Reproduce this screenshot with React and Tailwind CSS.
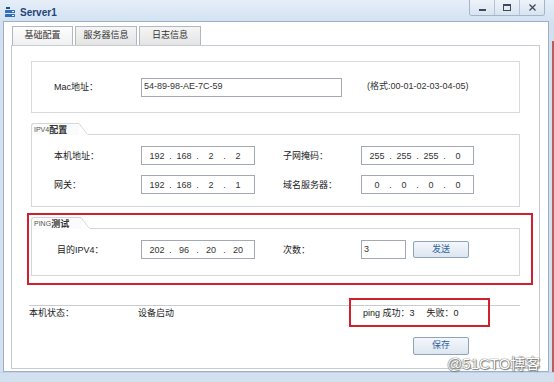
import React from "react";

const FONT = '"Liberation Sans","Noto Sans CJK SC",sans-serif';

function IpField({ parts, wide }) {
  return (
    <div
      className={
        wide
          ? "w-[114px] h-[19px] border border-[#a3a9b2] bg-white flex items-center pl-[4px] text-[9px] leading-[12px] text-[#333]"
          : "w-[113px] h-[19px] border border-[#a3a9b2] bg-white flex items-center pl-[4px] text-[9px] leading-[12px] text-[#333]"
      }
    >
      {parts.map((p, i) => (
        <React.Fragment key={i}>
          {i > 0 && <span className="w-[5px] text-center">.</span>}
          <span className="w-[22px] text-center">{p}</span>
        </React.Fragment>
      ))}
    </div>
  );
}

function Legend({ latin, cjk, w }) {
  return (
    <div className="flex h-[12px] items-stretch">
      <div
        className={
          (w === 50 ? "w-[50px]" : "w-[48px]") +
          " flex items-center border-l border-t border-[#d3d7dc] rounded-tl-[3px] bg-[#fbfbfb] pl-[2px]"
        }
      >
        <span className="text-[7px] leading-[10px] text-[#555]">{latin}</span>
        <span className="text-[9px] leading-[10px] font-bold text-[#333]">{cjk}</span>
      </div>
      <svg width="9" height="12" className="block shrink-0">
        <path d="M0 0.5 L8.5 11.5" stroke="#d3d7dc" strokeWidth="1" fill="none" />
      </svg>
      <div className="flex-1 border-b border-[#d3d7dc]" />
    </div>
  );
}

function Label({ children, w }) {
  return (
    <div
      className={
        (w === 78 ? "w-[78px]" : w === 84 ? "w-[84px]" : "w-[87px]") +
        " text-[9px] leading-[12px] text-[#222] shrink-0"
      }
    >
      {children}
    </div>
  );
}

export default function App() {
  return (
    <div
      className="relative w-[554px] h-[382px] overflow-hidden bg-[#d7e4f2] flex flex-col"
      style={{ fontFamily: FONT }}
    >
      {/* Title bar */}
      <div className="h-[21px] flex items-start bg-linear-to-b from-[#e6eef8] to-[#d3e2f2] shrink-0">
        <svg width="11" height="11" viewBox="0 0 11 11" className="ml-[5px] mt-[7px] shrink-0">
          <rect x="1" y="0" width="4" height="2" fill="#1f4f8f" />
          <rect x="0" y="3" width="10" height="3" rx="0.5" fill="#2f6fc0" />
          <rect x="0" y="7" width="10" height="3" rx="0.5" fill="#2f6fc0" />
          <rect x="7" y="8" width="2" height="1" fill="#ffffff" />
          <rect x="7" y="4" width="2" height="1" fill="#ffffff" />
        </svg>
        <span className="ml-[4px] mt-[6px] text-[10px] leading-[14px] font-bold text-[#1f4478]">
          Server1
        </span>
        <div className="ml-auto mr-[9px] flex h-[16px] border border-t-0 border-[#a3b5cb] rounded-b-[3px] overflow-hidden">
          <div className="w-[25px] flex items-end justify-center pb-[4px] bg-linear-to-b from-[#eef3f9] to-[#d9e4f0] border-r border-[#b5c4d6]">
            <div className="w-[7px] h-[2px] bg-[#3c4a5c]" />
          </div>
          <div className="w-[25px] flex items-center justify-center bg-linear-to-b from-[#eef3f9] to-[#d9e4f0] border-r border-[#b5c4d6]">
            <div className="w-[8px] h-[7px] border border-t-2 border-[#3c4a5c]" />
          </div>
          <div className="w-[24px] flex items-center justify-center bg-linear-to-b from-[#eef3f9] to-[#d9e4f0]">
            <svg width="7" height="7" viewBox="0 0 7 7">
              <path d="M0.5 0.5 L6.5 6.5 M6.5 0.5 L0.5 6.5" stroke="#3c4a5c" strokeWidth="1.3" />
            </svg>
          </div>
        </div>
      </div>

      {/* Body row */}
      <div className="flex h-[351px] shrink-0">
        <div className="w-[3px] bg-[#d3e0ef]" />
        <div className="w-[546px] h-[351px] bg-white border border-[#9db0c6] flex flex-col pt-[4px]">
          {/* Tabs */}
          <div className="flex items-end h-[19px] pl-[8px] gap-[2px]">
            <div className="w-[61px] h-[19px] border border-b-0 border-[#b2b8c1] bg-linear-to-b from-[#fdfdfd] to-[#f0f0f0] flex items-center justify-center text-[9px] text-[#333]">
              基础配置
            </div>
            <div className="w-[62px] h-[19px] border border-b-0 border-[#b2b8c1] bg-linear-to-b from-[#f5f5f5] to-[#e4e4e4] flex items-center justify-center text-[9px] text-[#333]">
              服务器信息
            </div>
            <div className="w-[62px] h-[19px] border border-b-0 border-[#b2b8c1] bg-linear-to-b from-[#f5f5f5] to-[#e4e4e4] flex items-center justify-center text-[9px] text-[#333]">
              日志信息
            </div>
          </div>
          {/* Panel */}
          <div className="ml-[7px] w-[529px] h-[324px] border border-[#c6ccd4] flex flex-col pt-[15px] pl-[19px]">
            {/* Mac box */}
            <div className="w-[489px] h-[52px] border border-[#d7dbe0] flex items-center pl-[22px]">
              <Label>Mac地址：</Label>
              <div className="w-[201px] h-[19px] border border-[#a3a9b2] flex items-center pl-[2px] text-[9px] text-[#333]">
                54-89-98-AE-7C-59
              </div>
              <span className="ml-[25px] text-[9px] text-[#333]">(格式:00-01-02-03-04-05)</span>
            </div>

            {/* IPV4 */}
            <div className="w-[489px] mt-[10px] flex flex-col">
              <Legend latin="IPV4" cjk="配置" />
              <div className="border-l border-r border-b border-[#d3d7dc] pt-[11px] pb-[12px] pl-[22px] flex flex-col gap-[10px]">
                <div className="flex items-center">
                  <Label>本机地址：</Label>
                  <IpField wide parts={["192", "168", "2", "2"]} />
                  <div className="ml-[28px] flex items-center">
                    <Label w={78}>子网掩码：</Label>
                    <IpField parts={["255", "255", "255", "0"]} />
                  </div>
                </div>
                <div className="flex items-center">
                  <Label>网关：</Label>
                  <IpField wide parts={["192", "168", "2", "1"]} />
                  <div className="ml-[28px] flex items-center">
                    <Label w={78}>域名服务器：</Label>
                    <IpField parts={["0", "0", "0", "0"]} />
                  </div>
                </div>
              </div>
            </div>

            {/* PING */}
            <div className="w-[489px] mt-[10px] flex flex-col">
              <Legend latin="PING" cjk="测试" w={50} />
              <div className="border-l border-r border-b border-[#d3d7dc] pt-[11px] pb-[16px] pl-[25px] flex items-center">
                <Label w={84}>目的IPV4：</Label>
                <IpField wide parts={["202", "96", "20", "20"]} />
                <div className="ml-[28px] flex items-center">
                  <Label w={78}>次数：</Label>
                  <div className="w-[45px] h-[19px] border border-[#a3a9b2] flex items-center pl-[2px] text-[9px] text-[#333]">
                    3
                  </div>
                  <button className="ml-[7px] w-[56px] h-[17px] border border-[#8fa3bb] rounded-[2px] bg-linear-to-b from-[#f4f7fb] to-[#dde6f0] text-[9px] text-[#2f63a3] flex items-center justify-center">
                    发送
                  </button>
                </div>
              </div>
            </div>

            {/* Status */}
            <div className="ml-[-2px] w-[491px] mt-[29px] border-t border-[#c9cdd2] pt-[1px] flex items-center text-[9px] leading-[12px] text-[#222]">
              <span className="w-[109px] shrink-0">本机状态：</span>
              <span className="w-[225px] shrink-0">设备启动</span>
              <span>ping 成功：3</span>
              <span className="ml-[12px]">失败：0</span>
            </div>

            {/* Save */}
            <button className="ml-[382px] mt-[18px] w-[56px] h-[18px] border border-[#8fa3bb] rounded-[2px] bg-linear-to-b from-[#f4f7fb] to-[#dde6f0] text-[9px] text-[#2f63a3] flex items-center justify-center">
              保存
            </button>
          </div>
        </div>
        <div className="w-[3px] bg-[#d3e0ef]" />
        <div className="w-[2px] flex flex-col">
          <div className="h-[20px] bg-[#d3e0ef]" />
          <div className="flex-1 bg-[#b9605e]" />
        </div>
      </div>

      {/* bottom frame */}
      <div className="flex-1 bg-[#d3e0ef] border-t border-[#c2d2e4]" />

      {/* Red highlight boxes */}
      <div className="absolute left-[27px] top-[213px] w-[506px] h-[72px] border-2 border-[#d0202e]" />
      <div className="absolute left-[349px] top-[298px] w-[141px] h-[29px] border-2 border-[#d0202e]" />

      {/* Watermark */}
      <div
        className="absolute left-[447px] top-[355px] text-[15px] leading-[18px] text-white [text-shadow:0_0_1px_#555,0_0_1px_#555,1px_1px_1px_#888]"
        style={{ fontFamily: '"Liberation Sans","Noto Sans CJK SC",sans-serif' }}
      >
        @51CTO博客
      </div>
    </div>
  );
}
